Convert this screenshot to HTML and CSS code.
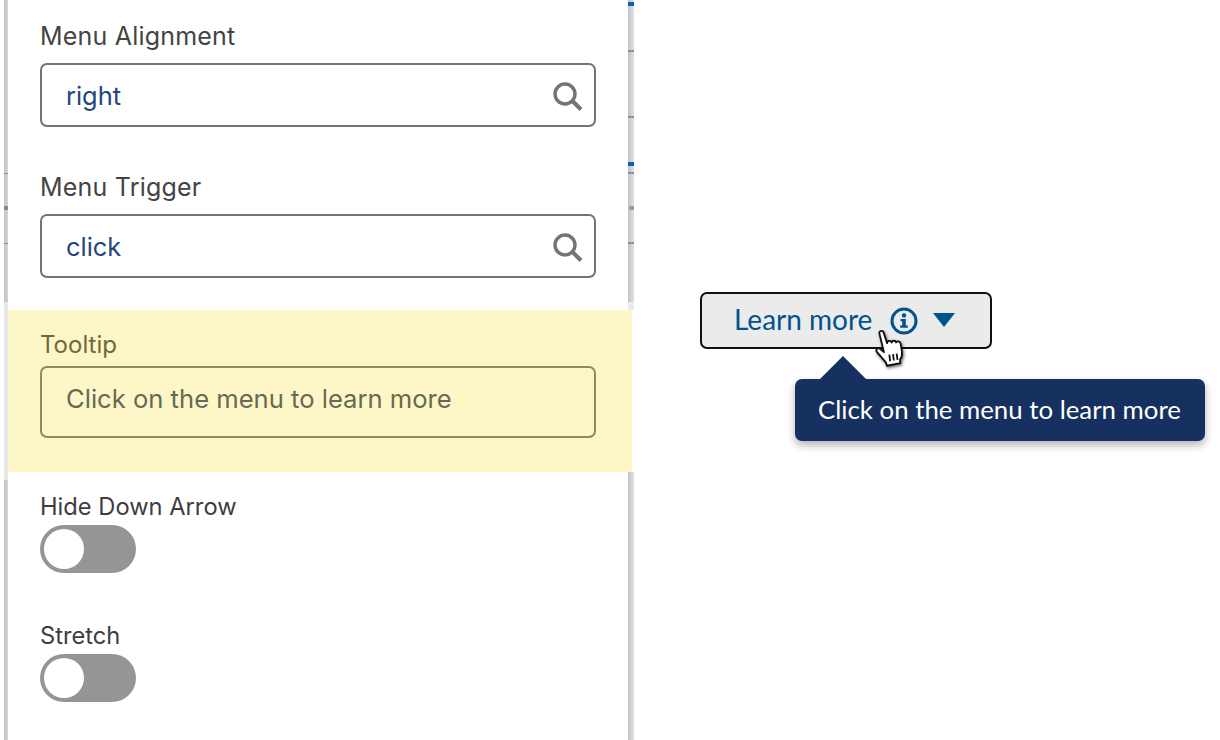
FILE: index.html
```html
<!DOCTYPE html>
<html lang="en">
<head>
<meta charset="utf-8">
<title>Menu settings</title>
<link rel="stylesheet" href="styles.css">
</head>
<body>
<div class="page">
  <div class="edge edge-left"></div>
  <aside class="panel">
    <div class="field field-first">
      <label class="label">Menu Alignment</label>
      <div class="input">
        <span class="value">right</span>
        <svg class="search" viewBox="0 0 30 30" width="30" height="30"><circle cx="12" cy="12" r="10" fill="none" stroke="#747474" stroke-width="3.400"/><path d="M19.500 19 L28 27.500" stroke="#747474" stroke-width="4" fill="none"/></svg>
      </div>
    </div>
    <div class="field field-second">
      <label class="label">Menu Trigger</label>
      <div class="input">
        <span class="value">click</span>
        <svg class="search" viewBox="0 0 30 30" width="30" height="30"><circle cx="12" cy="12" r="10" fill="none" stroke="#747474" stroke-width="3.400"/><path d="M19.500 19 L28 27.500" stroke="#747474" stroke-width="4" fill="none"/></svg>
      </div>
    </div>
    <div class="highlight">
      <label class="label label-small">Tooltip</label>
      <div class="input input-tall"><span class="placeholder">Click on the menu to learn more</span></div>
    </div>
    <div class="toggle-field toggle-first">
      <label class="label label-toggle">Hide Down Arrow</label>
      <div class="toggle"><span class="knob"></span></div>
    </div>
    <div class="toggle-field toggle-second">
      <label class="label label-toggle">Stretch</label>
      <div class="toggle"><span class="knob"></span></div>
    </div>
  </aside>
  <div class="edge edge-right"></div>
  <main class="stage">
    <div class="menu-wrap">
      <button class="menu-btn" type="button">
        <span class="menu-text">Learn more</span>
        <svg class="info" viewBox="0 0 28 28" width="28" height="28"><circle cx="14" cy="14" r="12" fill="none" stroke="#00538f" stroke-width="3"/><circle cx="14" cy="8.400" r="2.200" fill="#00538f"/><path d="M10.500 12h5.300v6.400h2v2.400h-7.600v-2.400h2v-4.100h-1.700z" fill="#00538f"/></svg>
        <span class="caret"></span>
      </button>
      <div class="tooltip"><span class="tip-arrow"></span>Click on the menu to learn more</div>
      <svg class="cursor" viewBox="0 0 36 40" width="38" height="42">
        <defs><filter id="cs" x="-30%" y="-30%" width="160%" height="160%"><feDropShadow dx="1" dy="1.500" stdDeviation="1.300" flood-color="#000" flood-opacity=".6"/></filter></defs>
        <path filter="url(#cs)" d="M5 4c-.5-2.300 3.300-3 4-.8l3.400 10.300c-.1-2.500 3.500-3 4.300-.6.200-2.200 3.800-2.300 4.300-.1.700-1.700 3.800-1.100 4.200 1l1.300 7.700c.5 3.200-.3 5.700-1.800 7.700l.3 3.300-12.800 2.500-1-3.200L2.800 22c-1.800-2.200.8-4.700 2.800-3.200l3.800 3.200z" fill="#fff" stroke="#111" stroke-width="1.700" stroke-linejoin="round"/>
        <path d="M14.500 24.500l.8 6M18 24l.8 6M21.500 23.500l.8 6" stroke="#111" stroke-width="1.700" fill="none"/>
      </svg>
    </div>
  </main>
</div>
</body>
</html>
```
FILE: styles.css
```css
* { box-sizing: border-box; }
html, body { margin: 0; padding: 0; background: #fff; }
body { width: 1220px; height: 740px; overflow: hidden; font-family: "Inter", "Liberation Sans", sans-serif; }
.page { display: flex; width: 1220px; height: 740px; }

.edge { flex: none; height: 740px; }
.edge-left {
  width: 8px;
  background:
    linear-gradient(#8f9295, #8f9295) 4px 173px / 4px 1px no-repeat,
    linear-gradient(#8a8a8a, #8a8a8a) 4px 206px / 4px 4px no-repeat,
    linear-gradient(#8f9295, #8f9295) 4px 243px / 4px 1px no-repeat,
    linear-gradient(#e6e8ea, #e6e8ea) 4px 302px / 4px 178px no-repeat,
    linear-gradient(to right, #bfc4c9, #d3d6d9) 4px 0 / 4px 740px no-repeat,
    #fff;
}
.edge-right {
  width: 6px;
  background:
    linear-gradient(#0b62b5, #0b62b5) 0 2px / 6px 4px no-repeat,
    linear-gradient(#8f9295, #8f9295) 0 50px / 6px 2px no-repeat,
    linear-gradient(#8f9295, #8f9295) 0 116px / 6px 2px no-repeat,
    linear-gradient(#0b62b5, #0b62b5) 0 162px / 6px 4px no-repeat,
    linear-gradient(#8f9295, #8f9295) 0 172px / 6px 2px no-repeat,
    linear-gradient(#9a9a9a, #9a9a9a) 1px 206px / 5px 4px no-repeat,
    linear-gradient(#8f9295, #8f9295) 0 242px / 6px 2px no-repeat,
    linear-gradient(#e9ebed, #e9ebed) 0 302px / 6px 8px no-repeat,
    linear-gradient(#fff, #fff) 4px 310px / 2px 162px no-repeat,
    linear-gradient(to right, #bfc4c9, #dfe1e3) 0 0 / 6px 740px no-repeat;
}

.panel { flex: none; width: 620px; height: 740px; display: flex; flex-direction: column; background: #fff; }
.label { display: block; font-size: 25px; letter-spacing: .2px; line-height: 30px; color: #444; }
.field { padding: 0 32px; }
.field-first { padding-top: 21px; }
.field-second { padding-top: 45px; }
.input {
  display: flex; align-items: center; justify-content: space-between;
  width: 556px; height: 64px; margin-top: 12px; padding: 0 11px 0 24px;
  border: 2px solid #747474; border-radius: 7px; background: #fff;
}
.value { font-size: 25.4px; color: #24467c; }
.search { flex: none; margin-top: 4px; }

.highlight { width: 624px; height: 162px; margin-top: 32px; padding: 20px 32px 0; background: #fdf6c6; margin-right: -4px; position: relative; }
.label-small { font-size: 24px; letter-spacing: 0; line-height: 30px; color: #70693c; }
.input-tall { height: 72px; margin-top: 6px; padding-bottom: 8px; border-color: #8f8a5c; background: #fdf6c6; }
.placeholder { font-size: 25.6px; color: #666a55; }

.toggle-field { padding: 0 32px; }
.toggle-first { padding-top: 20px; }
.toggle-second { padding-top: 48px; }
.label-toggle { font-size: 23.7px; letter-spacing: 0; line-height: 30px; color: #3e3e3e; }
.toggle { width: 96px; height: 48px; margin-top: 3px; padding: 4px; border-radius: 24px; background: #959595; }
.knob { display: block; width: 40px; height: 40px; border-radius: 50%; background: #fff; }

.stage { flex: 1; position: relative; padding: 292px 0 0 66px; }
.menu-wrap { position: relative; width: 292px; }
.menu-btn {
  display: flex; align-items: center; width: 292px; height: 57px; padding: 0 0 0 32px;
  border: 2px solid #111; border-radius: 7px; background: #ebebeb; font-family: "Lato", "Liberation Sans", sans-serif;
}
.menu-text { font-size: 28px; color: #00538f; margin-bottom: 4px; }
.info { flex: none; margin-left: 18px; }
.caret { flex: none; margin-left: 15px; margin-bottom: 2px; width: 0; height: 0; border-left: 11.5px solid transparent; border-right: 11.5px solid transparent; border-top: 14px solid #00538f; }
.tooltip {
  position: absolute; left: 95px; top: 87px; width: 410px; height: 62px; padding: 0 0 2px 23px;
  display: flex; align-items: center; border-radius: 7px; background: #16315f; color: #fff;
  font-family: "Lato", "Liberation Sans", sans-serif; font-size: 25.8px; white-space: nowrap;
  box-shadow: 0 4px 9px rgba(0,0,0,.3);
}
.tip-arrow { position: absolute; left: 25px; top: -23px; width: 0; height: 0; border-left: 23px solid transparent; border-right: 23px solid transparent; border-bottom: 23px solid #16315f; }
.cursor { position: absolute; left: 174px; top: 37px; }
```
